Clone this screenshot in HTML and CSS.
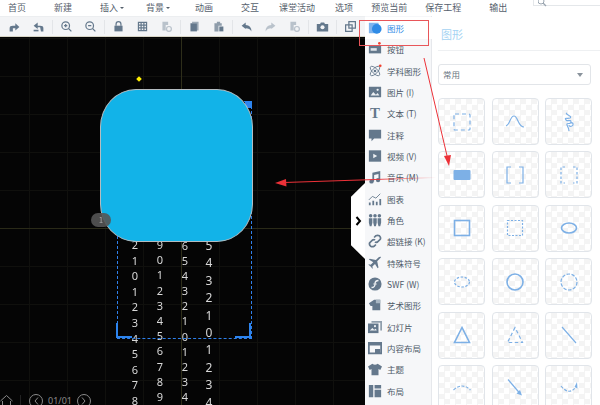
FILE: index.html
```html
<!DOCTYPE html>
<html lang="zh">
<head>
  <meta charset="UTF-8">
  <title>图形</title>
  <link rel="stylesheet" href="styles.css">
</head>
<body>

  <!-- top menu -->
  <div class="menu">
    <span>首页</span>
    <span>新建</span>
    <span class="has-arrow">插入<i></i></span>
    <span class="has-arrow">背景<i></i></span>
    <span class="after-arrow">动画</span>
    <span>交互</span>
    <span class="tight">课堂活动</span>
    <span class="tight">选项</span>
    <span class="tighter">预览当前</span>
    <span class="tighter">保存工程</span>
    <span>输出</span>
    <div class="search">
      <svg width="10" height="7" viewBox="0 0 10 7"><circle cx="3" cy="1" r="3" fill="none" stroke="#9aa5b0"/><path d="M5 3l3 3" stroke="#9aa5b0" stroke-width="1.2"/></svg>
    </div>
  </div>

  <div class="main">
    <div class="left">
      <!-- toolbar -->
      <div class="toolbar">
        <svg class="tool" viewBox="0 0 16 16"><path d="M2 14V10q0-3 4-3h3V4l5 4.500-5 4.500v-3H6v4z"/></svg>
        <svg class="tool" viewBox="0 0 16 16"><path d="M14 14V10q0-3-4-3H7V3L2 7l5 4V9h3l1 5z"/><path d="M2 12h6v2H2z"/></svg>
        <b class="sep"></b>
        <svg class="tool" viewBox="0 0 16 16"><circle cx="7" cy="7" r="4.700" class="ln"/><path d="M10.500 10.500l3.500 3.500M5 7h4M7 5v4" class="ln"/></svg>
        <svg class="tool" viewBox="0 0 16 16"><circle cx="7" cy="7" r="4.700" class="ln"/><path d="M10.500 10.500l3.500 3.500M5 7h4" class="ln"/></svg>
        <b class="sep"></b>
        <svg class="tool" viewBox="0 0 16 16"><path d="M3 7h10v7H3z"/><path d="M5 7V5a3 3 0 0 1 6 0v2" class="ln"/></svg>
        <svg class="tool" viewBox="0 0 16 16"><path d="M3 3h10v10H3zM6.300 3v10M9.700 3v10M3 6.300h10M3 9.700h10" class="ln"/></svg>
        <svg class="tool faded" viewBox="0 0 16 16"><path d="M3 2h7v4H7v7H3z"/><circle cx="11" cy="11" r="3" class="ln"/></svg>
        <b class="sep"></b>
        <svg class="tool" viewBox="0 0 16 16"><path d="M5 2h8v11h-2V4H5z" opacity=".6"/><path d="M3 4h8v10H3z"/></svg>
        <svg class="tool" viewBox="0 0 16 16"><path d="M3 4h3V2h4v2h2v3H8v7H3z" opacity=".7"/><path d="M9 8h5v6H9z"/></svg>
        <b class="sep"></b>
        <svg class="tool" viewBox="0 0 16 16"><path d="M2 7l5-4v3q7 0 7 8-2-4-7-4v1z"/></svg>
        <svg class="tool faded" viewBox="0 0 16 16"><path d="M14 7L9 3v3q-7 0-7 8 2-4 7-4v1z"/></svg>
        <svg class="tool faded" viewBox="0 0 16 16"><path d="M3 2h7v4H7v7H3z"/><circle cx="11" cy="11" r="3" class="ln"/></svg>
        <b class="sep"></b>
        <svg class="tool" viewBox="0 0 16 16"><path d="M1 5h4l1-2h4l1 2h4v9H1z"/><circle cx="8" cy="9" r="2.500" fill="#f3f4f6"/></svg>
        <b class="sep"></b>
        <svg class="tool" viewBox="0 0 16 16"><path d="M6 2h8v8H6zM2 6h8v8H2z" class="ln"/></svg>
      </div>

      <!-- canvas -->
      <div class="canvas">
        <div class="guide-v"></div>
        <div class="guide-h"></div>

        <div class="digits col-a">2<br>1<br>0<br>1<br>2<br>3<br>4<br>5<br>6<br>7<br>8</div>
        <div class="digits col-b">9<br>0<br>1<br>2<br>3<br>4<br>5<br>6<br>7<br>8<br>9</div>
        <div class="digits col-c">6<br>5<br>4<br>3<br>2<br>1<br>0<br>1<br>2<br>3<br>4</div>
        <div class="digits col-d">5<br>4<br>3<br>2<br>1<br>0<br>1<br>2<br>3<br>4</div>

        <div class="selection"></div>
        <div class="corner corner-l"></div>
        <div class="corner corner-r"></div>
        <div class="corner-top"></div>

        <div class="shape"></div>
        <div class="handle"></div>
        <div class="badge">1</div>

        <div class="pager">
          <svg width="13" height="12" viewBox="0 0 13 12"><path d="M.5 6l6-5.500 6 5.500M2.500 6v6M10.500 6v6" fill="none" stroke="#8a8a8a"/></svg>
          <b class="pager-sep"></b>
          <span class="round"><svg width="5" height="8" viewBox="0 0 5 8"><path d="M4 .5L1 4l3 3.500" fill="none" stroke="#8a8a8a"/></svg></span>
          <span>01/01</span>
          <span class="round"><svg width="5" height="8" viewBox="0 0 5 8"><path d="M1 .5L4 4 1 7.500" fill="none" stroke="#8a8a8a"/></svg></span>
        </div>

        <div class="collapse">
          <svg width="7" height="10" viewBox="0 0 7 10"><path d="M1.500 1l3.500 4-3.500 4" fill="none" stroke="#000" stroke-width="2"/></svg>
        </div>
      </div>
    </div>

    <!-- side list -->
    <ul class="side">
      <li class="active"><svg viewBox="0 0 16 16"><path d="M1 2h11v12H1z" fill="#7fb4ee"/><circle cx="10" cy="9" r="5.500" fill="#2f8be6"/></svg>图形</li>
      <li><svg viewBox="0 0 16 16"><path d="M1 4h14v9H1z"/><path d="M3 7h7v3H3z" fill="#dfe4ea"/><circle cx="13" cy="1.500" r="1.500" fill="#f0402e"/></svg>按钮</li>
      <li><svg viewBox="0 0 16 16"><ellipse cx="8" cy="8" rx="7" ry="3" transform="rotate(45 8 8)" class="ln"/><ellipse cx="8" cy="8" rx="7" ry="3" transform="rotate(-45 8 8)" class="ln"/><circle cx="8" cy="8" r="1.500"/><circle cx="14" cy="2" r="1.500" fill="#f0402e"/></svg>学科图形</li>
      <li><svg viewBox="0 0 16 16"><path d="M1 2h14v12H1z"/><path d="M3 12l3-4 3 3 2-2 2 3z" fill="#eef1f4"/><circle cx="11" cy="5.500" r="1.300" fill="#eef1f4"/></svg>图片 (I)</li>
      <li><svg viewBox="0 0 16 16"><text x="8" y="14" text-anchor="middle" class="icon-t">T</text></svg>文本 (T)</li>
      <li><svg viewBox="0 0 16 16"><path d="M1 2h14v10H7l-3 3v-3H1z"/></svg>注释</li>
      <li><svg viewBox="0 0 16 16"><path d="M1 1.500h14v13H1z"/><path d="M6 5.500l4.500 2.500L6 10.500z" fill="#eef1f4"/></svg>视频 (V)</li>
      <li><svg viewBox="0 0 16 16"><path d="M5 3l9-2v10h-2V4.500L7 5.700V13H5z"/><circle cx="4" cy="13" r="2.500"/><circle cx="11.500" cy="11.500" r="2.500"/></svg>音乐 (M)</li>
      <li><svg viewBox="0 0 16 16"><path d="M1 12h2v3H1zM5 10h2v5H5zM9 11h2v4H9zM13 8h2v7h-2z"/><path d="M1 9l4-4 4 2 5-5" class="ln"/></svg>图表</li>
      <li><svg viewBox="0 0 16 16"><circle cx="3" cy="3" r="2"/><circle cx="8" cy="3" r="2"/><circle cx="13" cy="3" r="2"/><path d="M1 6h4v5l-1 4H2l-1-4zM6 6h4v5l-1 4H7l-1-4zM11 6h4v5l-1 4h-2l-1-4z"/></svg>角色</li>
      <li><svg viewBox="0 0 16 16"><path d="M7 4l2-2q2-1 4 0 2 2 1 4l-3 3q-2 1-3 0M9 12l-2 2q-2 1-4 0-2-2-1-4l3-3q2-1 3 0" class="ln2"/></svg>超链接 (K)</li>
      <li><svg viewBox="0 0 16 16"><path d="M15 1q-2-.5-4 1.500L9 4.500 2 3 1 4l5 3-3 3-2-.5-.5.500L3 12l2 2.500.5-.5L5 12l3-3 3 5 1-1-1.500-7 2-2q2-2 2.500-3z"/></svg>特殊符号</li>
      <li><svg viewBox="0 0 16 16"><circle cx="8" cy="8" r="7.500"/><path d="M4 12q4 0 4-4t4-4" fill="none" stroke="#eef1f4" stroke-width="1.500"/><path d="M6 8h4" stroke="#eef1f4"/></svg>SWF (W)</li>
      <li><svg viewBox="0 0 16 16"><path d="M1 6l6-4h7v12H5V9H3z"/><path d="M9 2h5v4H9z" fill="#a8b6c3"/></svg>艺术图形</li>
      <li><svg viewBox="0 0 16 16"><path d="M0 4h12v11H0z"/><path d="M4 1h12v11h-2V3H4z" opacity=".7"/><path d="M2 12l3-3 2 2 2-1 1 2z" fill="#eef1f4"/><circle cx="8" cy="7" r="1.200" fill="#eef1f4"/></svg>幻灯片</li>
      <li><svg viewBox="0 0 16 16"><path d="M1 2h14v12H1z" class="ln2"/><path d="M1 2h14v3H1zM8 9h6v5H8z"/></svg>内容布局</li>
      <li><svg viewBox="0 0 16 16"><path d="M5 2L0 5l2 4 2-1v7h8V8l2 1 2-4-5-3q-3 2-6 0z"/></svg>主题</li>
      <li><svg viewBox="0 0 16 16"><path d="M1 1h5v14H1zM7.500 1H15v4H7.500zM7.500 6.500H15V15H7.500z"/></svg>布局</li>
    </ul>

    <!-- shape panel -->
    <div class="panel">
      <h2>图形</h2>
      <div class="select">常用<i></i></div>
      <div class="tiles">
        <div class="tile"><svg viewBox="0 0 24 24"><rect x="4" y="4" width="16" height="16" rx="1" stroke-dasharray="4 3"/></svg></div>
        <div class="tile"><svg viewBox="0 0 24 24"><path d="M3 16C7 15 7 6 11 6c4 0 4 11 10 11"/></svg></div>
        <div class="tile"><svg viewBox="0 0 24 24"><path d="M10 3c-3 1 6 3 3 5-3 1-6-1-4 2 2 2 5-1 5 2s-5 0-4 3c1 2 2 4 2 6M14 13c2-1 3 2 1 3s-3 0-3-1"/></svg></div>
        <div class="tile"><svg viewBox="0 0 24 24"><rect x="3.500" y="7" width="17" height="10" rx="1" class="fill"/></svg></div>
        <div class="tile"><svg viewBox="0 0 24 24"><path d="M8 4H4v16h4M16 4h4v16h-4"/></svg></div>
        <div class="tile"><svg viewBox="0 0 24 24"><path d="M8 4H4v16h4M16 4h4v16h-4" stroke-dasharray="2.500 2"/></svg></div>
        <div class="tile"><svg viewBox="0 0 24 24"><rect x="4.500" y="4.500" width="15" height="15" class="thick"/></svg></div>
        <div class="tile"><svg viewBox="0 0 24 24"><rect x="4.500" y="4.500" width="15" height="15" stroke-dasharray="2 1.500"/></svg></div>
        <div class="tile"><svg viewBox="0 0 24 24"><ellipse cx="12" cy="12" rx="7.500" ry="5" class="thick"/></svg></div>
        <div class="tile"><svg viewBox="0 0 24 24"><ellipse cx="12" cy="12" rx="7.500" ry="5" stroke-dasharray="2.500 1.500"/></svg></div>
        <div class="tile"><svg viewBox="0 0 24 24"><circle cx="12" cy="12" r="8" class="thick"/></svg></div>
        <div class="tile"><svg viewBox="0 0 24 24"><circle cx="12" cy="12" r="8" stroke-dasharray="3.500 1.500"/></svg></div>
        <div class="tile"><svg viewBox="0 0 24 24"><path d="M12 4.500L4.500 19.500h15z" class="thick"/></svg></div>
        <div class="tile"><svg viewBox="0 0 24 24"><path d="M12 4.500L4.500 19.500h15z" stroke-dasharray="3.500 2.500"/></svg></div>
        <div class="tile"><svg viewBox="0 0 24 24"><path d="M5 4l14 16"/></svg></div>
        <div class="tile"><svg viewBox="0 0 24 24"><path d="M3.500 14q8.500-8 17 0" stroke-dasharray="3 1.500"/></svg></div>
        <div class="tile"><svg viewBox="0 0 24 24"><path d="M5 3.500l12 14"/><path d="M19 19.500l-5.500-2 3.500-3.500z" class="fill"/></svg></div>
        <div class="tile"><svg viewBox="0 0 24 24"><path d="M4 10q8 10 15 1" stroke-dasharray="3 1.500"/><path d="M20 6l-2.500 5 3 1.500z" class="fill"/></svg></div>
      </div>
    </div>
  </div>

  <!-- red annotations drawn over the screenshot -->
  <svg class="notes" width="600" height="405" viewBox="0 0 600 405">
    <defs>
      <linearGradient id="fade" gradientUnits="userSpaceOnUse" x1="276" y1="0" x2="436" y2="0">
        <stop offset="0" stop-color="#ec3138"/>
        <stop offset=".6" stop-color="#ec3138"/>
        <stop offset="1" stop-color="#ec3138" stop-opacity="0"/>
      </linearGradient>
    </defs>
    <rect x="359.500" y="20.500" width="69" height="25" fill="none" stroke="#e8565a"/>
    <path d="M424 58l24 102" stroke="#ec3138" fill="none"/>
    <path d="M449 166l-5-10 7-1z" fill="#ec3138"/>
    <path d="M284 182.500L436 177.500" stroke="url(#fade)" stroke-width="1.200" fill="none"/>
    <path d="M275 183l11-4 .5 7.500z" fill="#ec3138"/>
  </svg>

</body>
</html>
```
FILE: styles.css
```css
html, body {
  margin: 0;
  padding: 0;
  height: 405px;
  overflow: hidden;
}
body {
  font-family: "Noto Sans CJK SC", "Liberation Sans", sans-serif;
  background: #fff;
  color: #55606c;
  position: relative;
}
.menu {
  height: 16px;
  display: flex;
  align-items: center;
  padding-left: 8px;
  gap: 28px;
  font-size: 9px;
  line-height: 14px;
  background: #fff;
  position: relative;
}
.menu .has-arrow {
  display: flex;
  align-items: center;
  gap: 2px;
  margin-right: -6px;
}
.menu .has-arrow i {
  border: 2px solid transparent;
  border-top: 2px solid #55606c;
  border-bottom: 0;
}
.menu .after-arrow {
  margin-left: 3px;
}
.menu .tight {
  margin-left: -8px;
}
.menu .tighter {
  margin-left: -10px;
}
.search {
  position: absolute;
  left: 533px;
  top: -1px;
  width: 70px;
  height: 7px;
  border: 1px solid #e4e7ea;
  padding-left: 4px;
  box-sizing: border-box;
  line-height: 0;
}
.main {
  display: flex;
  height: 389px;
}
.left {
  width: 365px;
  flex: none;
  display: flex;
  flex-direction: column;
  position: relative;
}
.toolbar {
  height: 19px;
  display: flex;
  align-items: center;
  padding-left: 2px;
  background: #f3f4f6;
  border-top: 1px solid #eceef0;
  border-bottom: 1px solid #d9d6c6;
  flex: none;
}
.tool {
  width: 13px;
  height: 13px;
  margin: 0 5.500px;
  fill: #64788c;
  flex: none;
}
.tool.faded {
  opacity: .4;
}
.tool .ln {
  fill: none;
  stroke: #64788c;
  stroke-width: 1.500;
}
.sep {
  width: 1px;
  height: 14px;
  background: #e3e5e8;
  margin: 0 1.500px;
  flex: none;
}
.canvas {
  flex: 1;
  position: relative;
  background-color: #050505;
  background-image:
    linear-gradient(to right, #10100d 1px, transparent 1px),
    linear-gradient(to bottom, #10100d 1px, transparent 1px);
  background-size: 38px 38px;
  background-position: 29px 1px;
  overflow: hidden;
}
.guide-v {
  position: absolute;
  left: 181px;
  top: 0;
  bottom: 0;
  width: 1px;
  background: #2e2e1a;
}
.guide-h {
  position: absolute;
  left: 0;
  right: 0;
  top: 191px;
  height: 1px;
  background: #2a2a18;
}
.digits {
  position: absolute;
  color: #d8d8d8;
  font-family: "Noto Sans", sans-serif;
  text-align: center;
  width: 14px;
  will-change: transform;
}
.col-a {
  left: 128px;
  top: 200px;
  font-size: 11px;
  line-height: 15.600px;
}
.col-b {
  left: 153px;
  top: 199.500px;
  font-size: 11px;
  line-height: 15.200px;
}
.col-c {
  left: 178px;
  top: 200.500px;
  font-size: 11px;
  line-height: 15.100px;
}
.col-d {
  left: 202px;
  top: 199.500px;
  font-size: 12px;
  line-height: 17.400px;
}
.selection {
  position: absolute;
  left: 117px;
  top: 64px;
  width: 133px;
  height: 236px;
  border: 1px dashed #2f80ea;
  box-sizing: content-box;
}
.corner {
  position: absolute;
  top: 286px;
  width: 14px;
  height: 13px;
  border-bottom: 2px solid #2d84ee;
}
.corner-l {
  left: 116px;
  border-left: 2px solid #2d84ee;
}
.corner-r {
  left: 235px;
  border-right: 2px solid #2d84ee;
}
.corner-top {
  position: absolute;
  left: 245px;
  top: 64px;
  width: 7px;
  height: 7px;
  background: #2d84ee;
}
.shape {
  position: absolute;
  left: 100px;
  top: 51.500px;
  width: 153px;
  height: 153px;
  box-sizing: border-box;
  background: #12b3e8;
  border: 1.500px solid #b4bcc0;
  border-radius: 36px / 38px;
}
.handle {
  position: absolute;
  left: 136.500px;
  top: 39.500px;
  width: 4px;
  height: 4px;
  background: #ffee00;
  transform: rotate(45deg);
}
.badge {
  position: absolute;
  left: 91px;
  top: 176px;
  width: 20px;
  height: 14px;
  border-radius: 7px;
  background: rgba(85, 85, 85, .9);
  color: #aaa;
  font-size: 8px;
  line-height: 14px;
  text-align: center;
}
.pager {
  position: absolute;
  left: 0;
  bottom: -3px;
  display: flex;
  align-items: center;
  gap: 5px;
  color: #8a8a8a;
  font-family: "Noto Sans", sans-serif;
  font-size: 9px;
  line-height: 12px;
}
.pager-sep {
  width: 1px;
  height: 12px;
  background: #222;
  margin: 0 3px 0 2px;
}
.round {
  width: 14px;
  height: 14px;
  border: 1px solid #8a8a8a;
  border-radius: 50%;
  box-sizing: border-box;
  display: flex;
  align-items: center;
  justify-content: center;
}
.collapse {
  position: absolute;
  left: 351px;
  top: 146px;
  width: 14px;
  height: 76px;
  background: #fff;
  clip-path: polygon(100% 0, 100% 100%, 0 82%, 0 18%);
  display: flex;
  align-items: center;
  justify-content: center;
}
.side {
  width: 67px;
  flex: none;
  margin: 0;
  padding: 1.300px 0 0;
  list-style: none;
  background: #f6f7f9;
  border-right: 1px solid #e6e8ec;
  box-sizing: border-box;
  font-size: 8.500px;
  color: #4d5a68;
}
.side li {
  height: 21.330px;
  display: flex;
  align-items: center;
  gap: 5px;
  padding-left: 3px;
  white-space: nowrap;
}
.side li.active {
  color: #2f8be6;
  background: #fff;
  margin-right: -1px;
}
.side svg {
  width: 14px;
  height: 14px;
  fill: #64788c;
  flex: none;
}
.side .ln {
  fill: none;
  stroke: #64788c;
}
.side .ln2 {
  fill: none;
  stroke: #64788c;
  stroke-width: 2;
}
.side .icon-t {
  font-family: "Liberation Serif", serif;
  font-size: 17px;
  font-weight: bold;
}
.panel {
  flex: 1;
  background: #fff;
  padding: 0 0 0 6px;
  overflow: hidden;
}
.panel h2 {
  margin: 0;
  height: 34px;
  border-bottom: 1px solid #eef0f2;
  font-size: 11px;
  font-weight: normal;
  line-height: 36px;
  color: #a5d3f3;
  padding-left: 3px;
}
.select {
  width: 153px;
  height: 21px;
  margin-top: 13px;
  border: 1px solid #e2e5e9;
  border-radius: 3px;
  box-sizing: border-box;
  padding: 0 7px 0 4px;
  font-size: 8.500px;
  line-height: 19px;
  color: #6b7682;
  display: flex;
  justify-content: space-between;
  align-items: center;
}
.select i {
  border: 3.500px solid transparent;
  border-top: 4px solid #8a939c;
  border-bottom: 0;
}
.tiles {
  display: grid;
  grid-template-columns: repeat(3, 47px);
  grid-auto-rows: 47px;
  column-gap: 6.500px;
  row-gap: 6.400px;
  margin-top: 13px;
}
.tile {
  box-sizing: border-box;
  border: 1px solid #e1e5ea;
  border-radius: 4px;
  background-color: #fff;
  background-image: conic-gradient(#f4f4f4 25%, transparent 0 50%, #f4f4f4 0 75%, transparent 0);
  background-size: 11px 11px;
  display: flex;
  align-items: center;
  justify-content: center;
}
.tile svg {
  width: 24px;
  height: 24px;
  fill: none;
  stroke: #7db0e6;
  stroke-width: 1.200;
}
.tile .thick {
  stroke-width: 1.600;
}
.tile .fill {
  fill: #7db0e6;
  stroke: none;
}
.notes {
  position: absolute;
  left: 0;
  top: 0;
  pointer-events: none;
}
```
